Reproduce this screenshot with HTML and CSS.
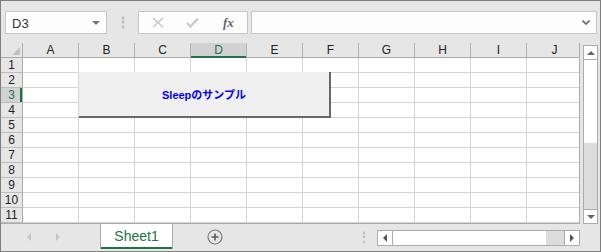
FILE: index.html
```html
<!DOCTYPE html>
<html lang="ja">
<head>
    <meta charset="UTF-8">
    <title>Sleepのサンプル</title>
    <link rel="stylesheet" href="styles.css">
</head>
<body>
<div class="janela">
    <div class="barra">
        <div class="caixa-nome">D3<span class="seta-baixo"></span></div>
        <div class="pontos">⋮</div>
        <div class="botoes-formula">
            <svg width="12" height="11" viewBox="0 0 12 11"><path d="M1 1 L11 10 M11 1 L1 10" stroke="#c8c8c8" stroke-width="1.6" fill="none"/></svg>
            <svg width="13" height="11" viewBox="0 0 13 11"><path d="M1 6 L4.5 9.5 L12 1.5" stroke="#c8c8c8" stroke-width="2.2" fill="none"/></svg>
            <span class="fx">fx</span>
        </div>
        <div class="formula">
            <svg width="8" height="5" viewBox="0 0 8 5"><path d="M0.5 0.5 L4 4 L7.5 0.5" stroke="#666" stroke-width="1.6" fill="none"/></svg>
        </div>
    </div>

    <div class="planilha">
        <div class="grade-area">
            <div class="grade">
                <div class="canto"><span class="tri"></span></div>
                <div class="ch">A</div><div class="ch">B</div><div class="ch">C</div><div class="ch ativo">D</div><div class="ch">E</div>
                <div class="ch">F</div><div class="ch">G</div><div class="ch">H</div><div class="ch">I</div><div class="ch">J</div>

                <div class="rh">1</div><div class="c"></div><div class="c"></div><div class="c"></div><div class="c"></div><div class="c"></div><div class="c"></div><div class="c"></div><div class="c"></div><div class="c"></div><div class="c"></div>
                <div class="rh">2</div><div class="c"></div><div class="c"></div><div class="c"></div><div class="c"></div><div class="c"></div><div class="c"></div><div class="c"></div><div class="c"></div><div class="c"></div><div class="c"></div>
                <div class="rh ativo">3</div><div class="c"></div><div class="c"></div><div class="c"></div><div class="c"></div><div class="c"></div><div class="c"></div><div class="c"></div><div class="c"></div><div class="c"></div><div class="c"></div>
                <div class="rh">4</div><div class="c"></div><div class="c"></div><div class="c"></div><div class="c"></div><div class="c"></div><div class="c"></div><div class="c"></div><div class="c"></div><div class="c"></div><div class="c"></div>
                <div class="rh">5</div><div class="c"></div><div class="c"></div><div class="c"></div><div class="c"></div><div class="c"></div><div class="c"></div><div class="c"></div><div class="c"></div><div class="c"></div><div class="c"></div>
                <div class="rh">6</div><div class="c"></div><div class="c"></div><div class="c"></div><div class="c"></div><div class="c"></div><div class="c"></div><div class="c"></div><div class="c"></div><div class="c"></div><div class="c"></div>
                <div class="rh">7</div><div class="c"></div><div class="c"></div><div class="c"></div><div class="c"></div><div class="c"></div><div class="c"></div><div class="c"></div><div class="c"></div><div class="c"></div><div class="c"></div>
                <div class="rh">8</div><div class="c"></div><div class="c"></div><div class="c"></div><div class="c"></div><div class="c"></div><div class="c"></div><div class="c"></div><div class="c"></div><div class="c"></div><div class="c"></div>
                <div class="rh">9</div><div class="c"></div><div class="c"></div><div class="c"></div><div class="c"></div><div class="c"></div><div class="c"></div><div class="c"></div><div class="c"></div><div class="c"></div><div class="c"></div>
                <div class="rh">10</div><div class="c"></div><div class="c"></div><div class="c"></div><div class="c"></div><div class="c"></div><div class="c"></div><div class="c"></div><div class="c"></div><div class="c"></div><div class="c"></div>
                <div class="rh">11</div><div class="c"></div><div class="c"></div><div class="c"></div><div class="c"></div><div class="c"></div><div class="c"></div><div class="c"></div><div class="c"></div><div class="c"></div><div class="c"></div>
            </div>
            <button class="botao-macro">Sleepのサンプル</button>
        </div>

        <div class="rolagem-v">
            <div class="seta-box"><span class="tri-cima"></span></div>
            <div class="polegar-v"></div>
            <div class="trilho-v"></div>
            <div class="seta-box"><span class="tri-baixo"></span></div>
        </div>
    </div>

    <div class="abas">
        <div class="nav">
            <span class="tri-esq claro"></span>
            <span class="tri-dir claro"></span>
        </div>
        <div class="aba">Sheet1</div>
        <div class="mais">
            <svg width="16" height="16" viewBox="0 0 16 16"><circle cx="8" cy="8" r="7" stroke="#7a7a7a" stroke-width="1.2" fill="none"/><path d="M8 4.5 V11.5 M4.5 8 H11.5" stroke="#5a5a5a" stroke-width="1.6"/></svg>
        </div>
        <div class="pontos pontos-abas">⋮</div>
        <div class="rolagem-h">
            <div class="seta-box-h"><span class="tri-esq"></span></div>
            <div class="polegar-h"></div>
            <div class="trilho-h"></div>
            <div class="seta-box-h"><span class="tri-dir"></span></div>
        </div>
    </div>
</div>
</body>
</html>
```

FILE: styles.css
```css
* {
    box-sizing: border-box;
    margin: 0;
    padding: 0;
}

body {
    background: #ffffff;
    font-family: 'Liberation Sans', Arial, sans-serif;
}

.janela {
    width: 601px;
    height: 252px;
    border: 1px solid #7f7f7f;
    background: #e6e6e6;
    display: flex;
    flex-direction: column;
    overflow: hidden;
}

/* barra de formulas */
.barra {
    height: 42px;
    display: flex;
    align-items: flex-start;
    padding: 10px 0 0 4px;
}

.caixa-nome, .botoes-formula, .formula {
    height: 23px;
    background: #fdfdfd;
    border: 1px solid #c6c6c6;
}

.caixa-nome {
    width: 102px;
    font-size: 13px;
    color: #333;
    padding: 4px 0 0 6px;
    position: relative;
}

.seta-baixo {
    position: absolute;
    right: 6px;
    top: 9px;
    border-left: 4px solid transparent;
    border-right: 4px solid transparent;
    border-top: 4px solid #777;
}

.pontos {
    width: 31px;
    text-align: center;
    color: #b4b4b4;
    font-size: 14px;
    line-height: 22px;
    font-weight: bold;
}

.botoes-formula {
    width: 110px;
    display: flex;
    align-items: center;
    padding-left: 13px;
}

.botoes-formula svg:nth-child(2) {
    margin-left: 22px;
}

.fx {
    margin-left: 24px;
    font-family: 'Liberation Serif', serif;
    font-style: italic;
    font-weight: bold;
    font-size: 13px;
    color: #666;
}

.formula {
    width: 346px;
    margin-left: 3px;
    display: flex;
    align-items: center;
    justify-content: flex-end;
    padding-right: 6px;
}

/* planilha */
.planilha {
    height: 181px;
    display: flex;
}

.grade-area {
    width: 579px;
    height: 181px;
    border-right: 1px solid #ababab;
    border-bottom: 1px solid #ababab;
    overflow: hidden;
    position: relative;
    background: #fff;
}

.grade {
    display: grid;
    grid-template-columns: 22px repeat(10, 56px);
    grid-auto-rows: 15px;
    width: 582px;
}

.c {
    border-right: 1px solid #d4d4d4;
    border-bottom: 1px solid #d4d4d4;
}

.ch, .rh, .canto {
    background: #e6e6e6;
    color: #222;
    font-size: 12px;
    text-align: center;
    line-height: 14px;
}

.ch {
    border-right: 1px solid #b4b4b4;
    border-bottom: 1px solid #ababab;
}

.rh {
    border-right: 1px solid #ababab;
    border-bottom: 1px solid #bdbdbd;
}

.canto {
    border-right: 1px solid #ababab;
    border-bottom: 1px solid #ababab;
    position: relative;
}

.tri {
    position: absolute;
    right: 2px;
    bottom: 2px;
    border-left: 8px solid transparent;
    border-bottom: 8px solid #c0c0c0;
}

.ch.ativo {
    background: #d2d2d2;
    color: #217346;
    box-shadow: inset 0 -2px 0 #217346;
    border-bottom: none;
}

.rh.ativo {
    background: #d2d2d2;
    color: #217346;
    box-shadow: inset -2px 0 0 #217346;
}

.botao-macro {
    position: absolute;
    left: 78px;
    top: 29px;
    width: 252px;
    height: 46px;
    background: #f0f0f0;
    border: none;
    border-right: 2px solid #696969;
    border-bottom: 2px solid #696969;
    color: #0000ff;
    font-family: 'Liberation Sans', 'Noto Sans CJK JP', sans-serif;
    font-weight: bold;
    font-size: 11px;
}

/* barra de rolagem vertical */
.rolagem-v {
    width: 15px;
    height: 179px;
    margin: 2px 0 0 3px;
    display: flex;
    flex-direction: column;
    border: 1px solid #ababab;
}

.seta-box {
    height: 14px;
    background: #fff;
    display: flex;
    align-items: center;
    justify-content: center;
}

.seta-box:first-child {
    border-bottom: 1px solid #ababab;
}

.seta-box:last-child {
    border-top: 1px solid #ababab;
}

.polegar-v {
    height: 83px;
    background: #fff;
}

.trilho-v {
    flex: 1;
    background: #dcdcdc;
}

.tri-cima {
    border-left: 4px solid transparent;
    border-right: 4px solid transparent;
    border-bottom: 4px solid #666;
}

.tri-baixo {
    border-left: 4px solid transparent;
    border-right: 4px solid transparent;
    border-top: 4px solid #666;
}

/* abas */
.abas {
    height: 27px;
    display: flex;
    align-items: flex-start;
}

.nav {
    width: 99px;
    height: 26px;
    display: flex;
    align-items: center;
    padding-left: 26px;
    gap: 25px;
}

.tri-esq {
    border-top: 4px solid transparent;
    border-bottom: 4px solid transparent;
    border-right: 4px solid #555;
}

.tri-dir {
    border-top: 4px solid transparent;
    border-bottom: 4px solid transparent;
    border-left: 4px solid #555;
}

.tri-esq.claro {
    border-right-color: #c4c4c4;
}

.tri-dir.claro {
    border-left-color: #c4c4c4;
}

.aba {
    width: 73px;
    height: 25px;
    background: #fff;
    border-left: 1px solid #ababab;
    border-right: 1px solid #ababab;
    box-shadow: inset 0 -2px 0 #217346;
    color: #217346;
    font-size: 14px;
    text-align: center;
    line-height: 24px;
}

.mais {
    margin: 5px 0 0 34px;
    width: 16px;
    height: 16px;
}

.pontos-abas {
    margin: 2px 0 0 134px;
    width: 7px;
    color: #c0c0c0;
}

.rolagem-h {
    margin: 6px 0 0 13px;
    width: 203px;
    height: 16px;
    display: flex;
    border: 1px solid #ababab;
}

.seta-box-h {
    width: 15px;
    background: #fff;
    display: flex;
    align-items: center;
    justify-content: center;
}

.seta-box-h:first-child {
    border-right: 1px solid #ababab;
}

.seta-box-h:last-child {
    border-left: 1px solid #ababab;
}

.polegar-h {
    width: 153px;
    background: #fff;
}

.trilho-h {
    flex: 1;
    background: #dcdcdc;
}
```
